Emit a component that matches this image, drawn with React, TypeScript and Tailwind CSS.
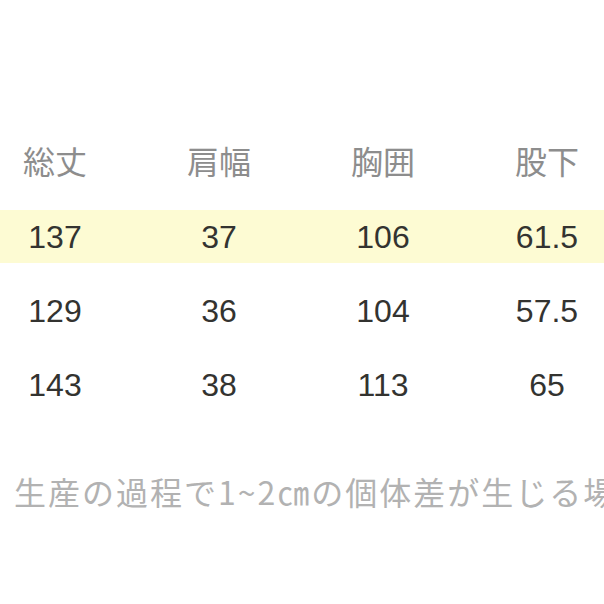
import React from "react";

const rows = [
  ["137", "37", "106", "61.5"],
  ["129", "36", "104", "57.5"],
  ["143", "38", "113", "65"],
];
const headers = ["総丈", "肩幅", "胸囲", "股下"];

function Cells({ items, className }: { items: string[]; className: string }) {
  return (
    <div className="ml-[-27px] grid w-[656px] grid-cols-4 items-center h-full">
      {items.map((t, i) => (
        <div key={i} className={"text-center " + className}>
          {t}
        </div>
      ))}
    </div>
  );
}

export default function App() {
  return (
    <div className="w-[604px] h-[604px] overflow-hidden bg-white flex flex-col pt-[136px]">
      <div className="flex flex-col gap-[21px]">
        <div className="h-[53px] pb-[6px]">
          <Cells
            items={headers}
            className="text-[32px] leading-none text-[#8d8d8d] [font-family:'Noto_Sans_CJK_JP',sans-serif]"
          />
        </div>
        {rows.map((r, i) => (
          <div key={i} className={"h-[53px] " + (i === 0 ? "bg-[#fdfbd3]" : "bg-white")}>
            <Cells
              items={r}
              className="text-[32px] leading-none text-[#333330] [font-family:'Liberation_Sans',Arial,sans-serif]"
            />
          </div>
        ))}
      </div>
      <div className="mt-[64px] pl-[14px] whitespace-nowrap text-[32px] tracking-[2px] leading-none text-[#b2b2b2] [font-family:'Noto_Sans_CJK_JP',sans-serif]">
        生産の過程で1~2㎝の個体差が生じる場合があります
      </div>
    </div>
  );
}
